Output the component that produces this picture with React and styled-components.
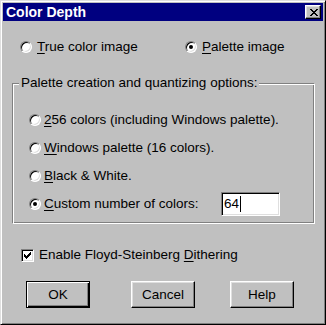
import React from "react";
import styled, { createGlobalStyle } from "styled-components";

const GlobalStyle = createGlobalStyle`
  html, body {
    margin: 0;
    padding: 0;
    background: #c0c0c0;
  }
  body {
    font-family: "Liberation Sans", Arial, sans-serif;
    font-size: 13.5px;
    color: #000;
  }
`

const Window = styled.div`
  box-sizing: border-box;
  width: 326px;
  height: 325px;
  padding: 2px;
  background: #c0c0c0;
  border: 1px solid;
  border-color: #dfdfdf #000 #000 #dfdfdf;
  box-shadow: inset 1px 1px #fff, inset -1px -1px #808080;
  display: flex;
  flex-direction: column;
`

const TitleBar = styled.div`
  height: 18px;
  background: #000080;
  display: flex;
  align-items: center;
  justify-content: space-between;
  padding: 0 2px 0 3px;
`

const Title = styled.span`
  color: #fff;
  font-weight: bold;
  font-size: 14px;
  line-height: 18px;
`

const CloseButton = styled.div`
  box-sizing: border-box;
  width: 16px;
  height: 14px;
  background: #c0c0c0;
  border: 1px solid;
  border-color: #fff #000 #000 #fff;
  box-shadow: inset -1px -1px #808080, inset 1px 1px #dfdfdf;
  display: flex;
  align-items: center;
  justify-content: center;
  padding-left: 1px;
`

const TopRow = styled.div`
  display: grid;
  grid-template-columns: 165px auto;
  margin-top: 18px;
  padding-left: 17px;
  height: 16px;
`

const Option = styled.label`
  display: flex;
  align-items: center;
  gap: ${p => p.$gap || 4}px;
  line-height: 16px;
  white-space: nowrap;
  width: ${p => (p.$width ? p.$width + "px" : "auto")};
`

const Radio = styled.span`
  box-sizing: border-box;
  position: relative;
  flex: none;
  width: 12px;
  height: 12px;
  border-radius: 50%;
  background: #fff;
  border: 1px solid;
  border-color: #808080 #fff #fff #808080;
  box-shadow: inset 1px 1px #000, inset -1px -1px #dfdfdf;

  &::after {
    content: "";
    display: ${p => (p.$checked ? "block" : "none")};
    position: absolute;
    left: 3px;
    top: 3px;
    width: 4px;
    height: 4px;
    border-radius: 50%;
    background: #000;
  }
`

const Key = styled.span`
  text-decoration: underline;
  text-underline-offset: 2px;
`

const Group = styled.fieldset`
  box-sizing: border-box;
  width: 303px;
  margin: 20px 0 0 9px;
  padding: 15px 0 5px 0;
  border: 1px solid;
  border-color: #808080 #fff #fff #808080;
  box-shadow: inset 1px 1px #fff, inset -1px -1px #808080;
  min-inline-size: 0;
`

const Legend = styled.legend`
  margin-left: 6px;
  padding: 0 2px;
  line-height: 16px;
  background: #c0c0c0;
`

const GroupRow = styled.div`
  display: flex;
  align-items: center;
  height: 28px;
  padding-left: 16px;
`

const TextBox = styled.div`
  box-sizing: border-box;
  width: 59px;
  height: 24px;
  background: #fff;
  border: 1px solid;
  border-color: #808080 #fff #fff #808080;
  box-shadow: inset 1px 1px #000, inset -1px -1px #dfdfdf;
  display: flex;
  align-items: center;
  padding-left: 2px;
  line-height: 16px;
`

const Caret = styled.span`
  display: inline-block;
  width: 1px;
  height: 16px;
  background: #000;
  margin-left: 1px;
`

const CheckRow = styled.div`
  display: flex;
  margin-top: 23px;
  padding-left: 18px;
  height: 16px;
`

const Checkbox = styled.span`
  box-sizing: border-box;
  flex: none;
  width: 13px;
  height: 13px;
  background: #fff;
  border: 1px solid;
  border-color: #808080 #fff #fff #808080;
  box-shadow: inset 1px 1px #000, inset -1px -1px #dfdfdf;
  display: flex;
  align-items: center;
  justify-content: center;
`

const ButtonRow = styled.div`
  display: flex;
  margin-top: 18px;
  padding-left: 23px;
`

const Button = styled.div`
  box-sizing: border-box;
  width: 64px;
  height: 27px;
  margin-left: ${p => p.$offset || 0}px;
  background: #c0c0c0;
  display: flex;
  align-items: center;
  justify-content: center;
  border: 1px solid;
  border-color: ${p => (p.$default ? "#000" : "#fff #000 #000 #fff")};
  box-shadow: ${p =>
    p.$default
      ? "inset 1px 1px #fff, inset -1px -1px #000, inset -2px -2px #808080"
      : "inset -1px -1px #808080, inset 1px 1px #dfdfdf"};
`

const CloseGlyph = () => (
  <svg width="8" height="7" viewBox="0 0 8 7" shapeRendering="crispEdges">
    <path
      fill="#000"
      d="M0 0h2v1H0z M6 0h2v1H6z M1 1h2v1H1z M5 1h2v1H5z M2 2h4v1H2z M3 3h2v1H3z M2 4h4v1H2z M1 5h2v1H1z M5 5h2v1H5z M0 6h2v1H0z M6 6h2v1H6z"
    />
  </svg>
)

const CheckGlyph = () => (
  <svg width="7" height="7" viewBox="0 0 7 7" shapeRendering="crispEdges">
    <path
      fill="#000"
      d="M0 2h1v3H0z M1 3h1v3H1z M2 4h1v3H2z M3 3h1v3H3z M4 2h1v3H4z M5 1h1v3H5z M6 0h1v3H6z"
    />
  </svg>
)

const App = () => {
  return (
    <>
      <GlobalStyle />
      <Window>
        <TitleBar>
          <Title>Color Depth</Title>
          <CloseButton><CloseGlyph /></CloseButton>
        </TitleBar>

        <TopRow>
          <Option $gap={5}><Radio /><span><Key>T</Key>rue color image</span></Option>
          <Option $gap={5}><Radio $checked /><span><Key>P</Key>alette image</span></Option>
        </TopRow>

        <Group>
          <Legend>Palette creation and quantizing options:</Legend>
          <GroupRow>
            <Option $gap={3}><Radio /><span><Key>2</Key>56 colors (including Windows palette).</span></Option>
          </GroupRow>
          <GroupRow>
            <Option $gap={3}><Radio /><span><Key>W</Key>indows palette (16 colors).</span></Option>
          </GroupRow>
          <GroupRow>
            <Option $gap={3}><Radio /><span><Key>B</Key>lack &amp; White.</span></Option>
          </GroupRow>
          <GroupRow>
            <Option $gap={3} $width={192}><Radio $checked /><span><Key>C</Key>ustom number of colors:</span></Option>
            <TextBox>64<Caret /></TextBox>
          </GroupRow>
        </Group>

        <CheckRow>
          <Option $gap={5}>
            <Checkbox><CheckGlyph /></Checkbox>
            <span>Enable Floyd-Steinberg <Key>D</Key>ithering</span>
          </Option>
        </CheckRow>

        <ButtonRow>
          <Button $default>OK</Button>
          <Button $offset={41}>Cancel</Button>
          <Button $offset={35}>Help</Button>
        </ButtonRow>
      </Window>
    </>
  )
}

export default App;
